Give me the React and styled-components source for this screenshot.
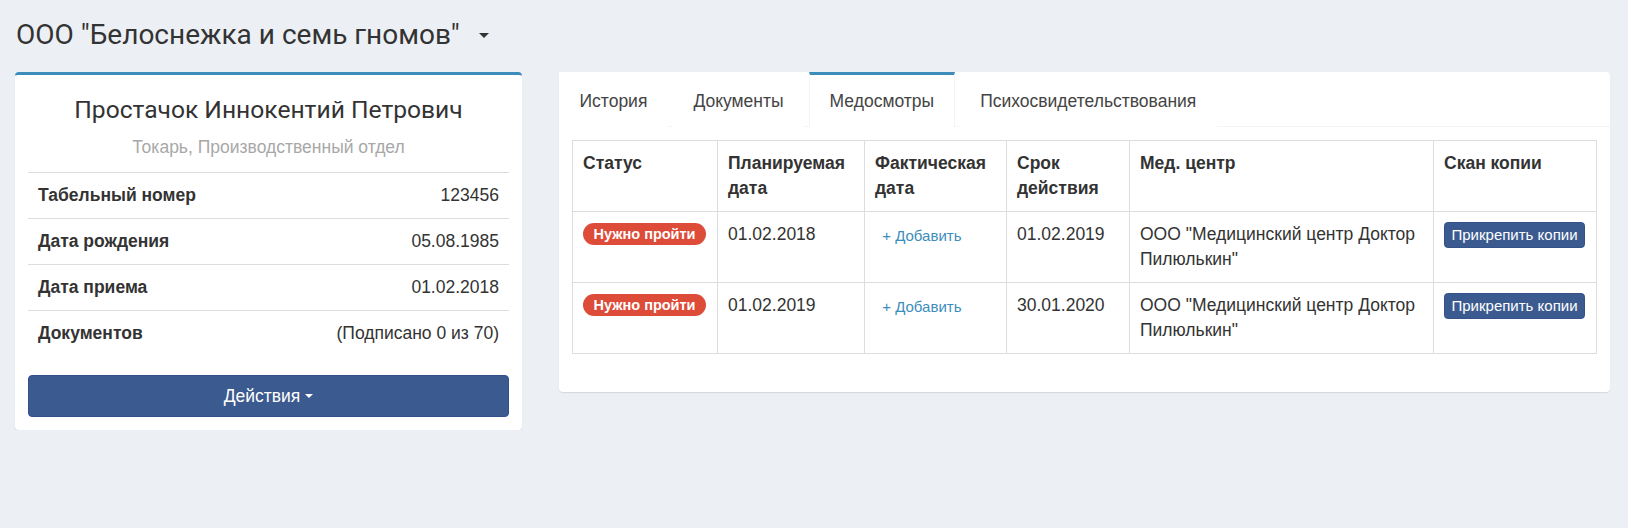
import React from "react";
import styled, { createGlobalStyle } from "styled-components";

const Global = createGlobalStyle`
  html, body { margin: 0; padding: 0; }
  body {
    background: #ecf0f5;
    font-family: "Liberation Sans", Arial, sans-serif;
    font-size: 17.5px;
    line-height: 25px;
    color: #333;
  }
  * { box-sizing: border-box; }
`;

const Page = styled.div`
  padding: 17px 15px 0 15px;
`;

const Header = styled.div`
  display: flex;
  align-items: center;
  gap: 19px;
  height: 36px;
  margin-bottom: 19px;
  padding-left: 1px;
`;

const Title = styled.h1`
  margin: 0;
  font-family: Roboto, "Noto Sans", sans-serif;
  font-weight: 400;
  font-size: 28px;
  line-height: 36px;
  color: #333;
`;

const Caret = styled.span`
  display: inline-block;
  width: 0;
  height: 0;
  border-top: ${(p) => p.$size || 5}px solid ${(p) => p.$color || "#333"};
  border-left: ${(p) => p.$size || 5}px solid transparent;
  border-right: ${(p) => p.$size || 5}px solid transparent;
  vertical-align: middle;
`;

const Columns = styled.div`
  display: flex;
  align-items: flex-start;
  gap: 37px;
`;

const Box = styled.div`
  flex: none;
  background: #fff;
  border-radius: 4px;
  border-top: ${(p) => (p.$accent ? "3px solid #3c8dbc" : "0")};
  box-shadow: 0 1px 1px rgba(0, 0, 0, 0.1);
  width: ${(p) => p.$w}px;
`;

const ProfileBody = styled.div`
  padding: 18px 13px 13px;
`;

const Name = styled.h3`
  margin: 0;
  text-align: center;
  font-family: Roboto, "Noto Sans", sans-serif;
  font-weight: 400;
  font-size: 24.6px;
  line-height: 34px;
  color: #333;
`;

const Muted = styled.p`
  margin: 5px 0 0;
  text-align: center;
  color: #a8a8a8;
  line-height: 30px;
  height: 40px;
`;

const InfoList = styled.ul`
  list-style: none;
  margin: 0 0 19px;
  padding: 0;
`;

const InfoRow = styled.li`
  display: flex;
  justify-content: space-between;
  align-items: center;
  height: 46px;
  padding: 0 10px;
  border-top: 1px solid #ddd;
`;

const Label = styled.b`
  font-weight: 700;
`;

const PrimaryButton = styled.button`
  display: flex;
  align-items: center;
  justify-content: center;
  gap: 5px;
  width: 100%;
  height: 42px;
  border: 1px solid #34528a;
  border-radius: 4px;
  background: #3b5a8f;
  color: #fff;
  font-family: "Liberation Sans", Arial, sans-serif;
  font-size: 17.5px;
  cursor: pointer;
`;

const TabNav = styled.ul`
  list-style: none;
  margin: 0;
  padding: 0;
  display: flex;
  gap: 5px;
  border-bottom: 1px solid #f4f4f4;
  height: 55px;
`;

const Tab = styled.li`
  border-top: 3px solid ${(p) => (p.$active ? "#3c8dbc" : "transparent")};
  border-left: 1px solid ${(p) => (p.$active ? "#f4f4f4" : "transparent")};
  border-right: 1px solid ${(p) => (p.$active ? "#f4f4f4" : "transparent")};
  background: #fff;
  margin-bottom: -1px;
  padding: 14px 19.5px 0;
  color: #444;
  white-space: nowrap;
`;

const TabContent = styled.div`
  padding: 12.5px 13px 38px;
`;

const Table = styled.table`
  width: 1024px;
  border-collapse: collapse;
  table-layout: fixed;
`;

const Th = styled.th`
  width: ${(p) => p.$w}px;
  border: 1px solid #ddd;
  padding: 10px;
  text-align: left;
  vertical-align: top;
  font-weight: 700;
  line-height: 25px;
`;

const Td = styled.td`
  border: 1px solid #ddd;
  padding: 10px;
  vertical-align: top;
  line-height: 25px;
`;

const Badge = styled.span`
  display: inline-block;
  background: #dd4b39;
  color: #fff;
  font-weight: 700;
  font-size: 14.5px;
  line-height: 15px;
  padding: 3.5px 10.5px;
  border-radius: 12px;
  white-space: nowrap;
  vertical-align: 1px;
`;

const LinkButton = styled.button`
  background: none;
  border: 1px solid transparent;
  padding: 1px 6.25px;
  margin-top: 1px;
  font-family: "Liberation Sans", Arial, sans-serif;
  font-size: 15px;
  line-height: 22.5px;
  color: #3c8dbc;
  cursor: pointer;
`;

const SmallButton = styled.button`
  background: #3b5a8f;
  border: 1px solid #34528a;
  border-radius: 3.75px;
  padding: 1px 6.5px;
  font-family: "Liberation Sans", Arial, sans-serif;
  font-size: 15px;
  line-height: 22.5px;
  color: #fff;
  white-space: nowrap;
  cursor: pointer;
`;

const info = [
  ["Табельный номер", "123456"],
  ["Дата рождения", "05.08.1985"],
  ["Дата приема", "01.02.2018"],
  ["Документов", "(Подписано 0 из 70)"],
];

const rows = [
  { plan: "01.02.2018", term: "01.02.2019" },
  { plan: "01.02.2019", term: "30.01.2020" },
];

const tabs = ["История", "Документы", "Медосмотры", "Психосвидетельствования"];

export default function App() {
  return (
    <>
      <Global />
      <Page>
        <Header>
          <Title>ООО "Белоснежка и семь гномов"</Title>
          <Caret $size={5} />
        </Header>
        <Columns>
          <Box $accent $w={507}>
            <ProfileBody>
              <Name>Простачок Иннокентий Петрович</Name>
              <Muted>Токарь, Производственный отдел</Muted>
              <InfoList>
                {info.map(([k, v]) => (
                  <InfoRow key={k}>
                    <Label>{k}</Label>
                    <span>{v}</span>
                  </InfoRow>
                ))}
              </InfoList>
              <PrimaryButton>
                Действия <Caret $size={4} $color="#fff" />
              </PrimaryButton>
            </ProfileBody>
          </Box>
          <Box $w={1051}>
            <TabNav>
              {tabs.map((t) => (
                <Tab key={t} $active={t === "Медосмотры"}>
                  {t}
                </Tab>
              ))}
            </TabNav>
            <TabContent>
              <Table>
                <thead>
                  <tr>
                    <Th $w={145}>Статус</Th>
                    <Th $w={147}>Планируемая дата</Th>
                    <Th $w={142}>Фактическая дата</Th>
                    <Th $w={123}>Срок действия</Th>
                    <Th $w={304}>Мед. центр</Th>
                    <Th $w={163}>Скан копии</Th>
                  </tr>
                </thead>
                <tbody>
                  {rows.map((r) => (
                    <tr key={r.plan}>
                      <Td>
                        <Badge>Нужно пройти</Badge>
                      </Td>
                      <Td>{r.plan}</Td>
                      <Td>
                        <LinkButton>+ Добавить</LinkButton>
                      </Td>
                      <Td>{r.term}</Td>
                      <Td>ООО "Медицинский центр Доктор Пилюлькин"</Td>
                      <Td>
                        <SmallButton>Прикрепить копии</SmallButton>
                      </Td>
                    </tr>
                  ))}
                </tbody>
              </Table>
            </TabContent>
          </Box>
        </Columns>
      </Page>
    </>
  );
}
